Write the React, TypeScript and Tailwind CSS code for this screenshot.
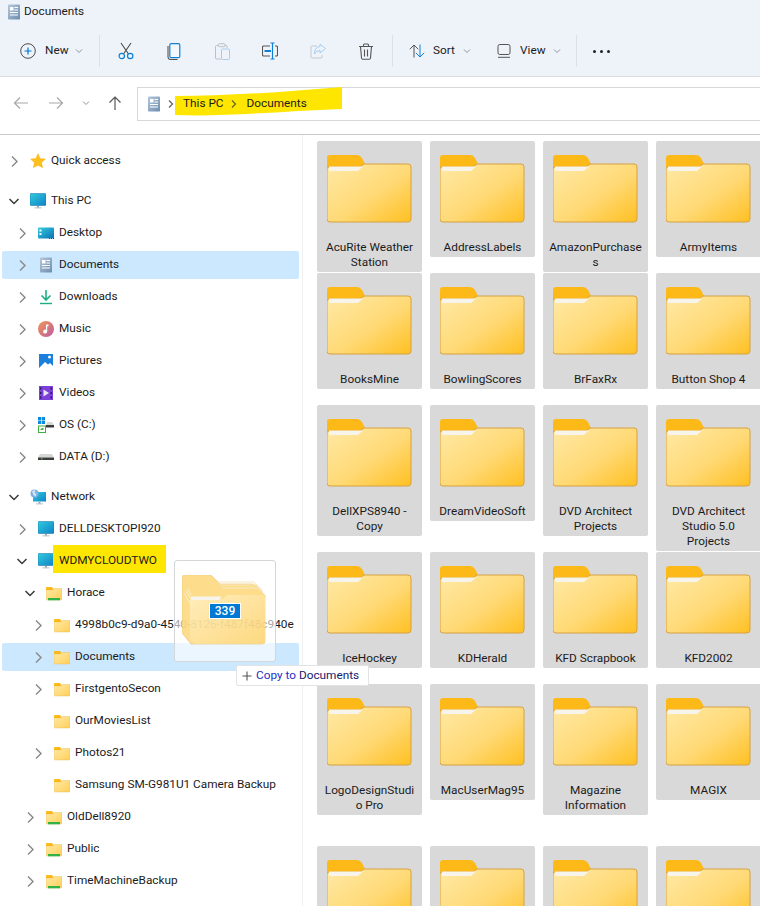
import { useId } from "react"

type IconName =
  | "star" | "monitor" | "desktop" | "docs" | "downloads" | "music" | "pictures"
  | "videos" | "os" | "drive" | "network" | "folder" | "share"

interface NavRow {
  label: string
  level: 0 | 1 | 2 | 3
  icon: IconName
  chevron?: "right" | "down"
  active?: boolean
  marked?: boolean
}

const levelPad = { 0: "pl-[4px]", 1: "pl-[12px]", 2: "pl-[20px]", 3: "pl-[28px]" }

const navGroups: NavRow[][] = [
  [{ label: "Quick access", level: 0, icon: "star", chevron: "right" }],
  [
    { label: "This PC", level: 0, icon: "monitor", chevron: "down" },
    { label: "Desktop", level: 1, icon: "desktop", chevron: "right" },
    { label: "Documents", level: 1, icon: "docs", chevron: "right", active: true },
    { label: "Downloads", level: 1, icon: "downloads", chevron: "right" },
    { label: "Music", level: 1, icon: "music", chevron: "right" },
    { label: "Pictures", level: 1, icon: "pictures", chevron: "right" },
    { label: "Videos", level: 1, icon: "videos", chevron: "right" },
    { label: "OS (C:)", level: 1, icon: "os", chevron: "right" },
    { label: "DATA (D:)", level: 1, icon: "drive", chevron: "right" },
  ],
  [
    { label: "Network", level: 0, icon: "network", chevron: "down" },
    { label: "DELLDESKTOPI920", level: 1, icon: "monitor", chevron: "right" },
    { label: "WDMYCLOUDTWO", level: 1, icon: "monitor", chevron: "down", marked: true },
    { label: "Horace", level: 2, icon: "share", chevron: "down" },
    { label: "4998b0c9-d9a0-4540-8126-f487f48c940e", level: 3, icon: "folder", chevron: "right" },
    { label: "Documents", level: 3, icon: "folder", chevron: "right", active: true },
    { label: "FirstgentoSecon", level: 3, icon: "folder", chevron: "right" },
    { label: "OurMoviesList", level: 3, icon: "folder" },
    { label: "Photos21", level: 3, icon: "folder", chevron: "right" },
    { label: "Samsung SM-G981U1 Camera Backup", level: 3, icon: "folder" },
    { label: "OldDell8920", level: 2, icon: "share", chevron: "right" },
    { label: "Public", level: 2, icon: "share", chevron: "right" },
    { label: "TimeMachineBackup", level: 2, icon: "share", chevron: "right" },
  ],
]

const folderRows: { height: string; names: string[] }[] = [
  { height: "h-[132px]", names: ["AcuRite Weather\nStation", "AddressLabels", "AmazonPurchase\ns", "ArmyItems"] },
  { height: "h-[132px]", names: ["BooksMine", "BowlingScores", "BrFaxRx", "Button Shop 4"] },
  { height: "h-[147px]", names: ["DellXPS8940 -\nCopy", "DreamVideoSoft", "DVD Architect\nProjects", "DVD Architect\nStudio 5.0\nProjects"] },
  { height: "h-[132px]", names: ["IceHockey", "KDHerald", "KFD Scrapbook", "KFD2002"] },
  { height: "h-[162px]", names: ["LogoDesignStudi\no Pro", "MacUserMag95", "Magazine\nInformation", "MAGIX"] },
  { height: "h-[132px]", names: ["", "", "", ""] },
]

function BigFolder() {
  const id = useId()
  return (
    <svg width="85" height="68" viewBox="0 0 85 68">
      <defs>
        <linearGradient id={id} x1="0" y1="0" x2="1" y2="1">
          <stop offset="0" stopColor="#ffe9a6" />
          <stop offset="0.55" stopColor="#ffd975" />
          <stop offset="1" stopColor="#ffc021" />
        </linearGradient>
      </defs>
      <path d="M0 3Q0 0 3 0H30Q33 0 35 3L38 9H81Q84 9 84 12V30H0Z" fill="#fdb917" />
      <path d="M0 14Q0 12 2 12H33L37 9H81Q84 9 84 12V64Q84 67 81 67H3Q0 67 0 64Z" fill={`url(#${id})`} stroke="#d6a243" strokeWidth="1" />
      <path d="M2 11.500H36L31 16H2Z" fill="#f7f4ec" />
    </svg>
  )
}

function GhostFolder() {
  const id = useId()
  return (
    <svg width="84" height="70" viewBox="0 0 84 70">
      <defs>
        <linearGradient id={id} x1="0" y1="0" x2="1" y2="1">
          <stop offset="0" stopColor="#ffeab0" />
          <stop offset="1" stopColor="#fdd26a" />
        </linearGradient>
      </defs>
      <path d="M0 3Q0 0 3 0H27Q30 0 32 3L38 9H70Q73 9 74 11L83 20V66Q83 69 80 69H9L0 58Z" fill="#fdd779" stroke="#e9c26f" strokeWidth="0.7" />
      <path d="M36 7H72L80 15M38 10H74L81 17M40 13H76L83 20" fill="none" stroke="#f6e3b3" strokeWidth="1" />
      <path d="M2 18L9 30M4 16L9 24M6 14L9 20" stroke="#f9edc9" strokeWidth="1" />
      <path d="M8 26Q8 24 10 24H41L45 20H80Q83 20 83 23V66Q83 69 80 69H14Q12 69 10 67L8 65Z" fill={`url(#${id})`} />
      <path d="M9 21.500H40L37 25H9Z" fill="#f6f2ea" />
    </svg>
  )
}

function NavIcon({ name }: { name: IconName }) {
  const id = useId()
  switch (name) {
    case "star":
      return (
        <svg width="16" height="16" viewBox="0 0 16 16">
          <path d="M8 .8l2.200 4.700 5.200.6-3.800 3.500 1 5.100L8 12.200l-4.600 2.500 1-5.100L.6 6.100l5.200-.6z" fill="#fdc01e" stroke="#f5a800" strokeWidth="0.4" />
        </svg>
      )
    case "monitor":
      return (
        <svg width="16" height="16" viewBox="0 0 16 16">
          <defs>
            <linearGradient id={id} x1="0" y1="0" x2="1" y2="1">
              <stop offset="0" stopColor="#30cbdc" />
              <stop offset="1" stopColor="#0e83c8" />
            </linearGradient>
          </defs>
          <rect x="0" y="0.500" width="16" height="12" rx="1" fill={`url(#${id})`} stroke="#0f6ea8" strokeWidth="0.5" />
          <path d="M7 13h2v1.500H7z" fill="#8fa3b0" />
          <path d="M4.500 14.500h7v.8h-7z" fill="#9fb0ba" />
        </svg>
      )
    case "desktop":
      return (
        <svg width="16" height="16" viewBox="0 0 16 16">
          <defs>
            <linearGradient id={id} x1="0" y1="0" x2="1" y2="1">
              <stop offset="0" stopColor="#33cddc" />
              <stop offset="1" stopColor="#0c70b8" />
            </linearGradient>
          </defs>
          <rect x="0" y="2.500" width="16" height="11" rx="1" fill={`url(#${id})`} />
          <path d="M1.500 4.500h2v2h-2zM1.500 8h2v2h-2z" fill="#fff" />
          <path d="M11 13h1v1h-1zM13 13h1v1h-1zM15 13h1v1h-1z" fill="#30485c" />
        </svg>
      )
    case "docs":
      return (
        <svg width="16" height="16" viewBox="0 0 16 16">
          <defs>
            <linearGradient id={id} x1="0" y1="0" x2="1" y2="1">
              <stop offset="0" stopColor="#b5c8dc" />
              <stop offset="1" stopColor="#6c8cae" />
            </linearGradient>
          </defs>
          <rect x="2" y="0.500" width="12" height="15" rx="0.800" fill={`url(#${id})`} />
          <path d="M4 3h3.500v3.500H4zM8.500 3H12v1H8.500zM8.500 5.500H12v1H8.500zM4 8h8v1H4zM4 10.500h8v1H4z" fill="#fff" />
        </svg>
      )
    case "downloads":
      return (
        <svg width="16" height="16" viewBox="0 0 16 16">
          <path d="M8 1v9.500M3.500 6.500L8 11l4.500-4.500" fill="none" stroke="#1fae84" strokeWidth="1.600" />
          <path d="M2 14.500h12" stroke="#1fae84" strokeWidth="1.400" />
        </svg>
      )
    case "music":
      return (
        <svg width="16" height="16" viewBox="0 0 16 16">
          <defs>
            <linearGradient id={id} x1="0" y1="0" x2="1" y2="1">
              <stop offset="0" stopColor="#ef9752" />
              <stop offset="1" stopColor="#bf5aa5" />
            </linearGradient>
          </defs>
          <circle cx="8" cy="8" r="8" fill={`url(#${id})`} />
          <path d="M8 3.500h2.500v1.700H9.200v5.300a2 2 0 1 1-1.200-1.800z" fill="#fff" />
        </svg>
      )
    case "pictures":
      return (
        <svg width="16" height="16" viewBox="0 0 16 16">
          <rect x="1" y="1" width="14" height="14" fill="#1a80dc" />
          <path d="M1 15l6-6 3 2.500 2-1.500 3 3v2z" fill="#fff" />
          <circle cx="11.500" cy="4" r="1.500" fill="#fff" />
        </svg>
      )
    case "videos":
      return (
        <svg width="16" height="16" viewBox="0 0 16 16">
          <rect x="1" y="1" width="14" height="14" fill="#7c3fd8" />
          <path d="M2 2.500h1.500v2H2zM2 7h1.500v2H2zM2 11.500h1.500v2H2zM12.500 2.500H14v2h-1.500zM12.500 7H14v2h-1.500zM12.500 11.500H14v2h-1.500z" fill="#2c1a6b" />
          <path d="M5.500 4.500v7L11 8z" fill="#e9e4f5" />
        </svg>
      )
    case "os":
      return (
        <svg width="16" height="16" viewBox="0 0 16 16">
          <path d="M0 0h3.200v3.200H0zM3.800 0H7v3.200H3.800zM0 3.800h3.200V7H0zM3.800 3.800H7V7H3.800z" fill="#0d8be0" />
          <path d="M9 5h5l2 3H8z" fill="#d8d8d8" />
          <path d="M8 8h8v2.500H8z" fill="#3c3c3c" />
          <rect x="0.500" y="9" width="7" height="6.500" fill="#fff" stroke="#3fae3f" />
          <path d="M2 13l2-2h1.500v2z" fill="#3fae3f" />
        </svg>
      )
    case "drive":
      return (
        <svg width="16" height="16" viewBox="0 0 16 16">
          <path d="M2 5h12l2 3.500H0z" fill="#d6d6d6" />
          <path d="M0 8.500h16V11H0z" fill="#3a3a3a" />
          <path d="M3 9.300h1.500v1H3z" fill="#49e849" />
        </svg>
      )
    case "network":
      return (
        <svg width="16" height="16" viewBox="0 0 16 16">
          <defs>
            <linearGradient id={id} x1="0" y1="0" x2="1" y2="1">
              <stop offset="0" stopColor="#30cbdc" />
              <stop offset="1" stopColor="#0e83c8" />
            </linearGradient>
          </defs>
          <rect x="3" y="3" width="13" height="9.500" fill={`url(#${id})`} />
          <path d="M8.500 13h2v1.500h-2z" fill="#8fa3b0" />
          <path d="M6 14.500h7v.8H6z" fill="#9fb0ba" />
          <circle cx="4.500" cy="4.500" r="4" fill="#7fb0e0" />
          <path d="M2 2.500l2-1.500 1.500 1-1 2 2 1-1 2.500-2-1.500z" fill="#d5e8f5" />
        </svg>
      )
    case "folder":
    case "share":
      return (
        <svg width="16" height="16" viewBox="0 0 16 16">
          <defs>
            <linearGradient id={id} x1="0" y1="0" x2="1" y2="1">
              <stop offset="0" stopColor="#ffeaa8" />
              <stop offset="1" stopColor="#ffcf57" />
            </linearGradient>
          </defs>
          <path d="M0 2.800Q0 2 .8 2H6l1.500 2H15.200Q16 2.800 16 4V8H0z" fill="#fdb917" />
          <path d="M0 5h6.500L8 3.500h7.200Q16 3.500 16 4.300V14.200Q16 15 15.200 15H.8Q0 15 0 14.200z" fill={`url(#${id})`} stroke="#e3b554" strokeWidth="0.4" />
          {name === "share" && <path d="M2 13h12v2.300H2z" fill="#2fb344" />}
        </svg>
      )
  }
}

function Chevron({ dir }: { dir?: "right" | "down" }) {
  if (!dir) return <span className="w-4 h-4 shrink-0" />
  return (
    <svg width="16" height="16" viewBox="0 0 16 16" className="shrink-0">
      {dir === "right" ? (
        <path d="M6 3.500L11 8.500 6 13.500" fill="none" stroke="#8c8c8c" strokeWidth="1.500" />
      ) : (
        <path d="M3.500 6L8 10.500 12.500 6" fill="none" stroke="#3a3a3a" strokeWidth="1.500" />
      )}
    </svg>
  )
}

function NavItem({ row }: { row: NavRow }) {
  return (
    <div className="h-[32px] py-[2px] px-[2px]">
      <div className={`h-[28px] w-[297px] rounded-[2px] flex items-center whitespace-nowrap ${levelPad[row.level]} ${row.active ? "bg-[#cce8ff]" : ""}`}>
        <Chevron dir={row.chevron} />
        <span className="ml-2 shrink-0"><NavIcon name={row.icon} /></span>
        <span className="relative ml-[5px]">
          {row.marked && <span className="absolute left-[-6px] right-[-9px] top-[-7px] bottom-[-3px] bg-[#ffe600]" />}
          <span className="relative">{row.label}</span>
        </span>
      </div>
    </div>
  )
}

function FolderTile({ name }: { name: string }) {
  return (
    <div className="w-[105px] self-start bg-[#d9d9d9] rounded-[2px] pb-[2px]">
      <div className="h-[99px] pl-[10px] pt-[14px]"><BigFolder /></div>
      <div className="text-center leading-[15px] whitespace-pre-line">{name}</div>
    </div>
  )
}

function Caret() {
  return (
    <svg width="8" height="8" viewBox="0 0 8 8" className="shrink-0">
      <path d="M1 2.500L4 5.500 7 2.500" fill="none" stroke="#8f9399" strokeWidth="1" />
    </svg>
  )
}

function Sep() {
  return <div className="w-px h-[32px] bg-[#dde1e6] shrink-0" />
}

function ToolIcon({ children }: { children: React.ReactNode }) {
  return <div className="w-12 h-full flex items-center justify-center shrink-0">{children}</div>
}

function Toolbar() {
  return (
    <div className="h-[50px] flex items-center">
      <div className="w-[99px] flex items-center pl-[20px] shrink-0">
        <svg width="16" height="16" viewBox="0 0 16 16">
          <circle cx="8" cy="8" r="7.300" fill="none" stroke="#4a4a4a" strokeWidth="1" />
          <path d="M8 4.500v7M4.500 8h7" stroke="#0078d4" strokeWidth="1.200" />
        </svg>
        <span className="ml-[9px] mr-[6px]">New</span>
        <Caret />
      </div>
      <Sep />
      <div className="flex items-center h-full ml-[2px]">
        <ToolIcon>
          <svg width="16" height="18" viewBox="0 0 16 18">
            <path d="M3 1l7.500 11M13 1L5.500 12" fill="none" stroke="#4b4b4b" strokeWidth="1.100" />
            <circle cx="3.800" cy="14" r="2.700" fill="none" stroke="#0f7fd6" strokeWidth="1.200" />
            <circle cx="12.200" cy="14" r="2.700" fill="none" stroke="#0f7fd6" strokeWidth="1.200" />
          </svg>
        </ToolIcon>
        <ToolIcon>
          <svg width="14" height="17" viewBox="0 0 14 17">
            <path d="M1 3v11q0 2.500 2.500 2.500h7" fill="none" stroke="#555" strokeWidth="1.100" />
            <rect x="2.800" y="0.700" width="10" height="14" rx="1.500" fill="#fff" fillOpacity="0.3" stroke="#0f7fd6" strokeWidth="1.200" />
          </svg>
        </ToolIcon>
        <ToolIcon>
          <svg width="15" height="17" viewBox="0 0 15 17">
            <path d="M4 2.500H1.500Q.5 2.500.5 3.500V15Q.5 16 1.500 16H6M10 2.500h1q1 0 1 1V5" fill="none" stroke="#bcbfc4" strokeWidth="1" />
            <rect x="3.500" y="0.700" width="6.500" height="3" rx="1" fill="none" stroke="#bcbfc4" strokeWidth="1" />
            <rect x="6.500" y="6" width="8" height="10.500" rx="1" fill="none" stroke="#a5cdf0" strokeWidth="1" />
          </svg>
        </ToolIcon>
        <ToolIcon>
          <svg width="16" height="18" viewBox="0 0 16 18">
            <path d="M8 4H1.500Q.5 4 .5 5v8q0 1 1 1H8M13 4h1.500q1 0 1 1v8q0 1-1 1H13" fill="none" stroke="#555" strokeWidth="1.100" />
            <path d="M2.500 8h6.500v2H2.500z" fill="#0f7fd6" />
            <path d="M8.500 1h4M8.500 17h4M10.500 1v16" fill="none" stroke="#0f7fd6" strokeWidth="1.200" />
          </svg>
        </ToolIcon>
        <ToolIcon>
          <svg width="16" height="16" viewBox="0 0 16 16">
            <path d="M7 3H2Q1 3 1 4v10q0 1 1 1h9q1 0 1-1v-2" fill="none" stroke="#c3c8ce" strokeWidth="1" />
            <path d="M10 1l5.500 4.500L10 10V7.500Q6 7.500 4.500 11 4.500 4 10 3.500z" fill="none" stroke="#a5cdf0" strokeWidth="1" />
          </svg>
        </ToolIcon>
        <ToolIcon>
          <svg width="16" height="17" viewBox="0 0 16 17">
            <path d="M1 3.500h14M5.500 3.500V2q0-1 1-1h3q1 0 1 1v1.500M2.500 3.500l1 11.500q.1 1.300 1.300 1.300h6.400q1.200 0 1.300-1.300l1-11.500M6.500 6.500v7M9.500 6.500v7" fill="none" stroke="#555" strokeWidth="1.100" />
          </svg>
        </ToolIcon>
      </div>
      <div className="ml-[2px]"><Sep /></div>
      <div className="w-[87px] flex items-center pl-4 shrink-0">
        <svg width="16" height="14" viewBox="0 0 16 14">
          <path d="M5 13.500V1M.8 5.200L5 1l4.200 4.200" fill="none" stroke="#555" strokeWidth="1" />
          <path d="M11 .5V13M6.800 8.800L11 13l4.200-4.200" fill="none" stroke="#0f7fd6" strokeWidth="1" />
        </svg>
        <span className="ml-2 mr-[8px]">Sort</span>
        <Caret />
      </div>
      <div className="w-[96px] flex items-center pl-4 shrink-0">
        <svg width="16" height="14" viewBox="0 0 16 14">
          <rect x="2" y="0.500" width="12" height="10" rx="1.800" fill="none" stroke="#555" strokeWidth="1" />
          <path d="M2 13.300h12" stroke="#555" strokeWidth="1" />
        </svg>
        <span className="ml-2 mr-[7px]">View</span>
        <Caret />
      </div>
      <Sep />
      <div className="ml-[16px] flex gap-[4px]">
        <span className="w-[3px] h-[3px] rounded-full bg-[#222]" />
        <span className="w-[3px] h-[3px] rounded-full bg-[#222]" />
        <span className="w-[3px] h-[3px] rounded-full bg-[#222]" />
      </div>
    </div>
  )
}

function AddressBar() {
  return (
    <div className="h-[58px] border-b border-[#c9cbce] flex items-start bg-white">
      <div className="w-[137px] h-[52px] flex items-center pl-[13px] shrink-0">
        <svg width="16" height="14" viewBox="0 0 16 14">
          <path d="M15 7H1.500M7 1.500L1.500 7 7 12.500" fill="none" stroke="#a8a8a8" strokeWidth="1.200" />
        </svg>
        <svg width="16" height="14" viewBox="0 0 16 14" className="ml-[19px]">
          <path d="M1 7h13.500M9 1.500L14.500 7 9 12.500" fill="none" stroke="#a8a8a8" strokeWidth="1.200" />
        </svg>
        <span className="ml-[18px]"><Caret /></span>
        <svg width="16" height="16" viewBox="0 0 16 16" className="ml-[17px]">
          <path d="M8 15V2M2.500 7.500L8 2l5.500 5.500" fill="none" stroke="#555" strokeWidth="1.200" />
        </svg>
      </div>
      <div className="mt-[10px] flex-1 h-[34px] border-y border-l border-[#d5d7da] flex items-center pl-[8px]">
        <NavIcon name="docs" />
        <svg width="8" height="10" viewBox="0 0 8 10" className="ml-[5px]">
          <path d="M2 1.500L5.500 5 2 8.500" fill="none" stroke="#666" strokeWidth="1.300" />
        </svg>
        <div className="relative ml-[8px] flex items-center">
          <svg width="168" height="32" viewBox="0 0 168 32" className="absolute left-[-8px] top-[-8px] overflow-visible">
            <path d="M0 9C50 9 110 5 167 0L167 22C110 24 50 30 0 28Z" fill="#ffe600" />
          </svg>
          <span className="relative">This PC</span>
          <svg width="8" height="10" viewBox="0 0 8 10" className="relative ml-[6px]">
            <path d="M2 1.500L5.500 5 2 8.500" fill="none" stroke="#6b6a20" strokeWidth="1.300" />
          </svg>
          <span className="relative ml-[9px]">Documents</span>
        </div>
      </div>
    </div>
  )
}

export default function App() {
  return (
    <div className="relative w-[760px] h-[906px] overflow-hidden bg-white text-[11.8px] text-[#1b1b1b] font-['Roboto',sans-serif]">
      <div className="h-[77px] bg-[#eef3fa] border-b border-[#d9dce0]">
        <div className="h-[26px] flex items-center pl-[6px] pb-[2px]">
          <NavIcon name="docs" />
          <span className="ml-[2px]">Documents</span>
        </div>
        <Toolbar />
      </div>
      <AddressBar />

      <div className="flex h-[771px]">
        <div className="w-[303px] shrink-0 border-r border-[#f0f0f0] pt-[10px] flex flex-col gap-2">
          {navGroups.map((group, i) => (
            <div key={i}>
              {group.map((row) => (
                <NavItem key={row.label + row.level + row.icon} row={row} />
              ))}
            </div>
          ))}
        </div>
        <div className="pl-[14px] pt-[6px] flex-1">
          {folderRows.map((row, i) => (
            <div key={i} className={`flex gap-2 ${row.height}`}>
              {row.names.map((name, j) => (
                <FolderTile key={j} name={name} />
              ))}
            </div>
          ))}
        </div>
      </div>

      {/* drag ghost */}
      <div className="absolute left-[174px] top-[560px] w-[102px] h-[102px] bg-white/60 border border-[#d4d6d9] rounded-[3px] pl-[7px] pt-[14px]">
        <div className="relative opacity-85">
          <GhostFolder />
        </div>
        <div className="absolute left-[34px] top-[42px] w-[32px] h-[16px] bg-[#0078d4] border border-white text-white text-[12px] leading-[14px] text-center font-medium">
          339
        </div>
      </div>
      <div className="absolute left-[236px] top-[665px] w-[133px] h-[21px] bg-white border border-[#e3e3e3] rounded-[2px] flex items-center pl-[4px] whitespace-nowrap">
        <svg width="12" height="12" viewBox="0 0 12 12">
          <path d="M6 1.500v9M1.500 6h9" stroke="#555" strokeWidth="1.100" />
        </svg>
        <span className="ml-[3px] text-[#1f2fc8]">Copy to</span>
        <span className="ml-[3px] text-[#16206e]">Documents</span>
      </div>
    </div>
  )
}
